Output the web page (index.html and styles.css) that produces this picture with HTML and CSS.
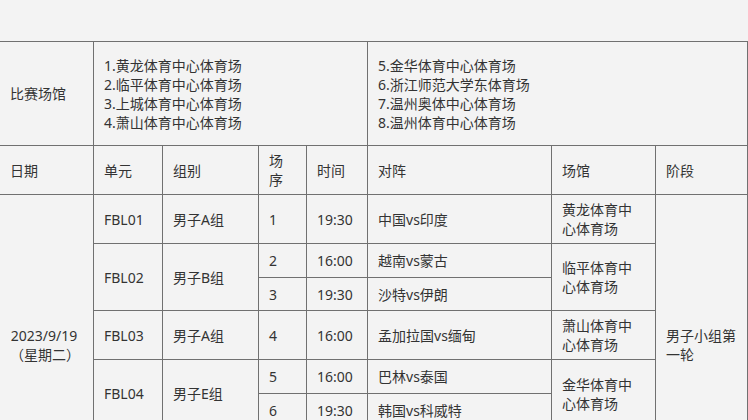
FILE: index.html
```html
<!DOCTYPE html>
<html lang="zh-CN">
<head>
<meta charset="utf-8">
<title>赛程安排</title>
<link rel="stylesheet" href="styles.css">
</head>
<body>
<div class="page">
  <table class="schedule">
    <colgroup>
      <col class="c-date"><col class="c-unit"><col class="c-group"><col class="c-no"><col class="c-time"><col class="c-match"><col class="c-venue"><col class="c-stage">
    </colgroup>
    <tbody>
      <tr class="r-venues">
        <td>比赛场馆</td>
        <td colspan="4">1.黄龙体育中心体育场<br>2.临平体育中心体育场<br>3.上城体育中心体育场<br>4.萧山体育中心体育场</td>
        <td colspan="3">5.金华体育中心体育场<br>6.浙江师范大学东体育场<br>7.温州奥体中心体育场<br>8.温州体育中心体育场</td>
      </tr>
      <tr class="r-head">
        <td>日期</td><td>单元</td><td>组别</td><td>场<br>序</td><td>时间</td><td>对阵</td><td>场馆</td><td>阶段</td>
      </tr>
      <tr class="r-49">
        <td rowspan="8" class="date">2023/9/19<br>（星期二）</td>
        <td>FBL01</td><td>男子A组</td><td>1</td><td>19:30</td><td>中国vs印度</td><td>黄龙体育中心体育场</td>
        <td rowspan="8">男子小组第一轮</td>
      </tr>
      <tr class="r-34">
        <td rowspan="2">FBL02</td><td rowspan="2">男子B组</td><td>2</td><td>16:00</td><td>越南vs蒙古</td><td rowspan="2">临平体育中心体育场</td>
      </tr>
      <tr class="r-33">
        <td>3</td><td>19:30</td><td>沙特vs伊朗</td>
      </tr>
      <tr class="r-49">
        <td>FBL03</td><td>男子A组</td><td>4</td><td>16:00</td><td>孟加拉国vs缅甸</td><td>萧山体育中心体育场</td>
      </tr>
      <tr class="r-34">
        <td rowspan="2">FBL04</td><td rowspan="2">男子E组</td><td>5</td><td>16:00</td><td>巴林vs泰国</td><td rowspan="2">金华体育中心体育场</td>
      </tr>
      <tr class="r-34">
        <td>6</td><td>19:30</td><td>韩国vs科威特</td>
      </tr>
      <tr class="r-34">
        <td rowspan="2">FBL05</td><td rowspan="2">男子D组</td><td>7</td><td>16:00</td><td>日本vs卡塔尔</td><td rowspan="2">温州奥体中心体育场</td>
      </tr>
      <tr class="r-34">
        <td>8</td><td>19:30</td><td>朝鲜vs中国台北</td>
      </tr>
    </tbody>
  </table>
</div>
</body>
</html>
```

FILE: styles.css
```css
html, body {
  margin: 0;
  padding: 0;
  background: #f3f3f3;
}

body {
  font-family: "Noto Sans", "Noto Sans CJK SC", sans-serif;
  font-size: 14px;
  color: #333333;
}

.page {
  box-sizing: border-box;
  padding-top: 41px;
  overflow: hidden;
  width: 748px;
  height: 420px;
}

.schedule {
  border-collapse: collapse;
  table-layout: fixed;
  width: 748px;
  margin-left: -1px;
}

.schedule td {
  border: 1px solid #707070;
  padding: 5px 10px;
  line-height: 19px;
  text-align: left;
  vertical-align: middle;
  white-space: normal;
}

.c-date { width: 94px; }
.c-unit { width: 69px; }
.c-group { width: 96px; }
.c-no { width: 48px; }
.c-time { width: 61px; }
.c-match { width: 184px; }
.c-venue { width: 104px; }
.c-stage { width: 92px; }

.r-venues { height: 104px; }
.r-head { height: 49px; }
.r-49 { height: 49px; }
.r-34 { height: 34px; }
.r-33 { height: 33px; }

.schedule td.date {
  text-align: center;
  padding-right: 15px;
}
```
